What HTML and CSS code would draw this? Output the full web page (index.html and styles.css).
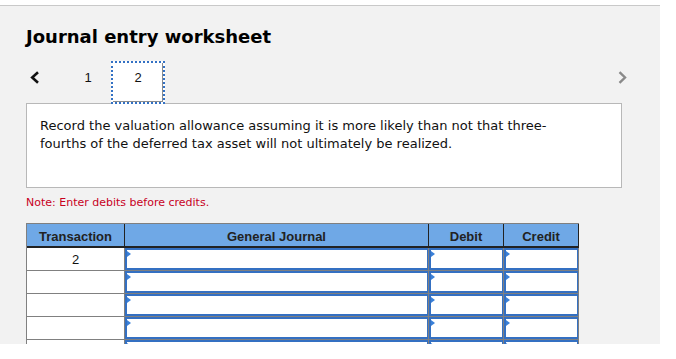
FILE: index.html
```html
<!DOCTYPE html>
<html lang="en">
<head>
    <meta charset="UTF-8">
    <title>Journal entry worksheet</title>
    <link rel="stylesheet" href="styles.css">
</head>
<body>
    <div class="panel">
        <h1 class="title">Journal entry worksheet</h1>

        <div class="nav">
            <svg class="arrow prev" width="10" height="13" viewBox="0 0 10 13">
                <polyline points="8,1.2 2.2,6.5 8,11.8" fill="none" stroke="#111" stroke-width="2.6"/>
            </svg>
            <div class="tab">1</div>
            <div class="tab active">2</div>
            <svg class="arrow next" width="9" height="13" viewBox="0 0 9 13">
                <polyline points="1.5,1.2 7,6.5 1.5,11.8" fill="none" stroke="#8a8a8a" stroke-width="2.4"/>
            </svg>
        </div>

        <div class="question">
            <p>Record the valuation allowance assuming it is more likely than not that three-fourths of the deferred tax asset will not ultimately be realized.</p>
        </div>

        <p class="note">Note: Enter debits before credits.</p>

        <table class="journal">
            <thead>
                <tr>
                    <th class="col-trans">Transaction</th>
                    <th class="col-account">General Journal</th>
                    <th class="col-amount">Debit</th>
                    <th class="col-amount">Credit</th>
                </tr>
            </thead>
            <tbody>
                <tr>
                    <td class="trans">2</td>
                    <td><div class="field"></div></td>
                    <td><div class="field"></div></td>
                    <td><div class="field"></div></td>
                </tr>
                <tr>
                    <td class="trans"></td>
                    <td><div class="field"></div></td>
                    <td><div class="field"></div></td>
                    <td><div class="field"></div></td>
                </tr>
                <tr>
                    <td class="trans"></td>
                    <td><div class="field"></div></td>
                    <td><div class="field"></div></td>
                    <td><div class="field"></div></td>
                </tr>
                <tr>
                    <td class="trans"></td>
                    <td><div class="field"></div></td>
                    <td><div class="field"></div></td>
                    <td><div class="field"></div></td>
                </tr>
                <tr>
                    <td class="trans"></td>
                    <td><div class="field"></div></td>
                    <td><div class="field"></div></td>
                    <td><div class="field"></div></td>
                </tr>
            </tbody>
        </table>
    </div>
</body>
</html>
```

FILE: styles.css
```css
body {
    margin: 0;
    background-color: white;
    font-family: "DejaVu Sans", Verdana, sans-serif;
    color: #111;
}
.panel {
    margin-top: 5px;
    width: 660px;
    height: 339px;
    box-sizing: border-box;
    padding-left: 26px;
    background-color: #f2f2f2;
    border-top: 1px solid #c9c9c9;
    overflow: hidden;
}
.title {
    margin: 0;
    padding-top: 20px;
    font-size: 18px;
    line-height: 22px;
    font-weight: bold;
    color: #000;
}
.nav {
    display: flex;
    align-items: flex-start;
    width: 601px;
    height: 43px;
    margin-top: 13px;
}
.arrow {
    margin-top: 10px;
}
.prev {
    margin-left: 4px;
}
.next {
    margin-left: auto;
}
.tab {
    width: 44px;
    height: 43px;
    box-sizing: border-box;
    padding-top: 9px;
    margin-left: 26px;
    text-align: center;
    font-family: "Liberation Sans", Arial, sans-serif;
    font-size: 13px;
    line-height: 16px;
    color: #111;
}
.tab.active {
    position: relative;
    z-index: 1;
    width: 54px;
    margin-left: 1px;
    background-color: white;
    border: 2px dotted #3371c4;
    box-shadow: inset -1px -1px 0 #8c8c8c;
    padding-top: 7px;
}
.question {
    height: 85px;
    width: 596px;
    box-sizing: border-box;
    margin-top: -1px;
    padding: 13px 40px 0 13px;
    background-color: white;
    border: 1px solid #b8b8b8;
}
.question p {
    margin: 0;
    font-size: 13px;
    line-height: 18px;
}
.note {
    margin: 8px 0 0 0;
    font-size: 11px;
    line-height: 14px;
    color: #c8001e;
}
.journal {
    margin-top: 13px;
    border-collapse: separate;
    border-spacing: 0;
    border-left: 1px solid #808080;
    border-top: 1px solid #808080;
    font-family: "Liberation Sans", Arial, sans-serif;
    font-size: 13px;
}
.journal th, .journal td {
    box-sizing: border-box;
    padding: 0;
}
.journal th {
    height: 24px;
    padding-top: 2px;
    background-color: #6fa8e6;
    color: #222;
    font-weight: bold;
    border-right: 1px solid #222;
    border-bottom: 2px solid #222;
}
.col-trans {
    width: 98px;
}
.col-account {
    width: 304px;
}
.col-amount {
    width: 75px;
}
.journal td {
    height: 23px;
    background-color: white;
    border-right: 1px solid #808080;
    border-bottom: 1px solid #808080;
}
.trans {
    text-align: center;
    color: #111;
}
.field {
    position: relative;
    height: 22px;
    box-sizing: border-box;
    border: 2px solid #3470c2;
    border-right-width: 1px;
}
.field::before {
    content: "";
    position: absolute;
    left: 0;
    top: 1px;
    border-left: 4px solid #3a80d8;
    border-top: 3px solid transparent;
    border-bottom: 3px solid transparent;
}
```
